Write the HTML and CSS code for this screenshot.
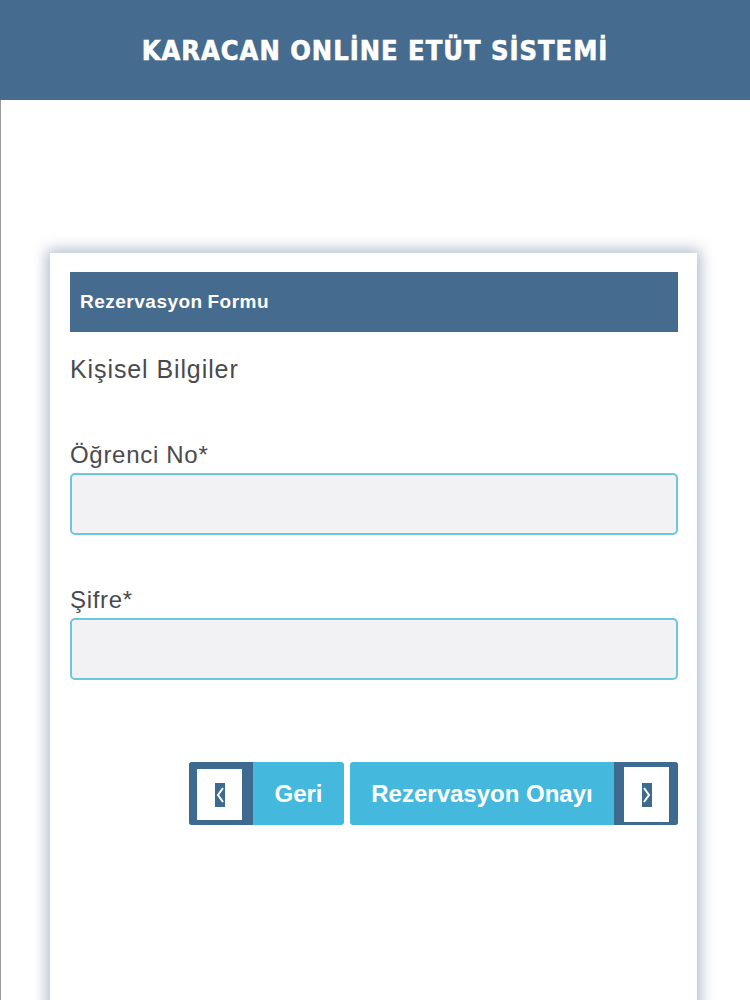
FILE: index.html
```html
<!DOCTYPE html>
<html>
<head>
  <meta charset="UTF-8">
  <title>Karacan Online Etüt Sistemi</title>
  <link rel="stylesheet" href="styles.css">
</head>
<body>

<!-- Top bar -->
<div class="topbar">
  <h1>KARACAN ONLİNE ETÜT SİSTEMİ</h1>
</div>

<!-- Page content -->
<div class="page">
  <div class="card">
    <div class="card-title">Rezervasyon Formu</div>

    <h3 class="section">Kişisel Bilgiler</h3>

    <label for="ogrenciNo">Öğrenci No*</label>
    <input type="text" id="ogrenciNo">

    <label for="sifre">Şifre*</label>
    <input type="password" id="sifre">

    <div class="actions">
      <button class="btn btn-back">
        <span class="btn-icon">
          <span class="icon-box">
            <svg width="10" height="24" viewBox="0 0 10 24"><path d="M8 5 L3 12 L8 19" fill="none" stroke="#fff" stroke-width="2"/></svg>
          </span>
        </span>
        <span class="btn-text">Geri</span>
      </button>
      <button class="btn btn-next">
        <span class="btn-text">Rezervasyon Onayı</span>
        <span class="btn-icon">
          <span class="icon-box">
            <svg width="10" height="24" viewBox="0 0 10 24"><path d="M2 5 L7 12 L2 19" fill="none" stroke="#fff" stroke-width="2"/></svg>
          </span>
        </span>
      </button>
    </div>
  </div>
</div>

</body>
</html>
```

FILE: styles.css
```css
* {
  box-sizing: border-box;
}

body {
  font-family: "Liberation Sans", Arial, sans-serif;
  margin: 0;
  padding: 0;
  background: #fff;
  color: #4a4a4e;
}

/* Top bar */
.topbar {
  height: 100px;
  background-color: #456c8e;
  display: flex;
  align-items: center;
  justify-content: center;
}

.topbar h1 {
  margin: 0;
  color: #fff;
  font-family: "DejaVu Sans Condensed", "DejaVu Sans", sans-serif;
  font-weight: bold;
  font-stretch: condensed;
  font-size: 27px;
  letter-spacing: 1px;
  -webkit-text-stroke: 0.6px #fff;
}

.page {
  border-left: 1px solid #9a9a9a;
  padding: 153px 0 0 49px;
  height: 900px;
  overflow: hidden;
}

.card {
  width: 647px;
  height: 800px;
  background: #fff;
  padding: 19px 19px 0 20px;
  box-shadow: 0 0 14px 3px rgba(70, 100, 135, 0.45);
}

.card-title {
  height: 60px;
  background-color: #456c8e;
  color: #fff;
  font-weight: bold;
  font-size: 19px;
  letter-spacing: 0.5px;
  word-spacing: -1px;
  padding-left: 10px;
  display: flex;
  align-items: center;
}

.section {
  margin: 23px 0 0 0;
  font-weight: normal;
  font-size: 25px;
  letter-spacing: 0.9px;
  color: #4a4a4e;
}

label {
  display: block;
  font-size: 24px;
  letter-spacing: 0.7px;
  margin-top: 57px;
  margin-bottom: 4px;
}

input {
  display: block;
  width: 100%;
  height: 62px;
  background: #f2f2f4;
  border: 2px solid #6cc6dc;
  border-radius: 5px;
  font-size: 20px;
  padding: 0 12px;
}

input + label {
  margin-top: 51px;
}

.actions {
  display: flex;
  justify-content: flex-end;
  gap: 6px;
  margin-top: 82px;
}

.btn {
  display: flex;
  height: 63px;
  padding: 0;
  border: none;
  border-radius: 3px;
  overflow: hidden;
  background-color: #44b9dd;
  color: #fff;
  font-family: "Liberation Sans", Arial, sans-serif;
  font-weight: bold;
  font-size: 24px;
  letter-spacing: 0;
  cursor: pointer;
}

.btn-icon {
  width: 64px;
  background-color: #3f6a8f;
  display: flex;
  align-items: center;
  padding: 7px 11px 5px 8px;
}

.btn-next .btn-icon {
  padding: 5px 9px 3px 10px;
}

.icon-box {
  flex: 1;
  height: 100%;
  background: #fff;
  display: flex;
  align-items: center;
  justify-content: center;
}

.icon-box svg {
  background-color: #3f6a8f;
}

.btn-text {
  display: flex;
  align-items: center;
  justify-content: center;
}

.btn-back .btn-text {
  width: 91px;
}

.btn-next .btn-text {
  width: 264px;
}
```
